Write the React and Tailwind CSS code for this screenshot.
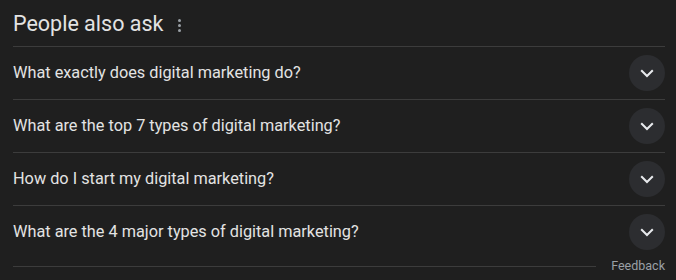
import React from 'react';

const questions = [
  'What exactly does digital marketing do?',
  'What are the top 7 types of digital marketing?',
  'How do I start my digital marketing?',
  'What are the 4 major types of digital marketing?',
];

const Chevron = () => (
  <svg width="24" height="24" viewBox="0 0 24 24" fill="none">
    <path d="M6.2 9.2 12 15l5.8-5.8" stroke="#e8eaed" strokeWidth="2" />
  </svg>
);

const App = () => {
  return (
    <div className="w-[676px] h-[280px] bg-[#1f1f1f] text-[#e3e3e3] pl-[13px] pr-[11px] overflow-hidden" style={{ fontFamily: 'Roboto, "Open Sans", sans-serif' }}>
      <div className="flex items-center h-[46px] pt-[2px]">
        <h2 className="text-[21.5px] leading-none">People also ask</h2>
        <div className="ml-[15px] flex flex-col gap-[2px] mt-[2px]">
          <span className="block w-[3px] h-[3px] rounded-full bg-[#9aa0a6]" />
          <span className="block w-[3px] h-[3px] rounded-full bg-[#9aa0a6]" />
          <span className="block w-[3px] h-[3px] rounded-full bg-[#9aa0a6]" />
        </div>
      </div>
      {questions.map((q) => (
        <div key={q} className="flex items-center justify-between h-[53px] border-t border-[#3c3c3c]">
          <span className="text-[16.3px]">{q}</span>
          <div className="w-9 h-9 rounded-full bg-[#2c2d30] flex items-center justify-center">
            <Chevron />
          </div>
        </div>
      ))}
      <div className="flex items-center h-[16px]">
        <div className="flex-1 border-t border-[#3c3c3c]" />
        <span className="text-[12.5px] leading-none text-[#9aa0a6] ml-[15px]">Feedback</span>
      </div>
    </div>
  );
};

export default App;
